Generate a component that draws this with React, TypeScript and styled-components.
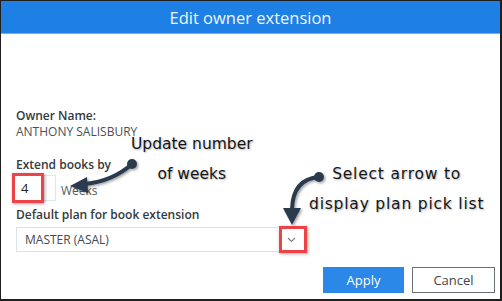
import styled, { createGlobalStyle } from "styled-components";

const GlobalStyle = createGlobalStyle`
  html, body {
    margin: 0;
    padding: 0;
    background: #ffffff;
  }
  body {
    font-family: "Open Sans", "Noto Sans", Arial, sans-serif;
  }
`;

const Frame = styled.div`
  position: relative;
  width: 502px;
  height: 301px;
  box-sizing: border-box;
  border-style: solid;
  border-color: #1f1f1f;
  border-width: 1px 2px 2px 1px;
  background: #ffffff;
  display: flex;
  flex-direction: column;
  overflow: hidden;
`;

const TitleBar = styled.div`
  height: 32px;
  background: #1e80e5;
  border-bottom: 1px solid #6fb0f2;
  color: #eef5fd;
  font-size: 16.5px;
  display: flex;
  align-items: center;
  justify-content: center;
`;

const Body = styled.div`
  flex: 1;
  display: flex;
  flex-direction: column;
  padding: 74px 0 0 15px;
`;

const Label = styled.div<{ $gap?: number }>`
  font-size: 12px;
  line-height: 16px;
  font-weight: 600;
  color: #333a40;
  margin-top: ${({ $gap }) => $gap ?? 0}px;
`;

const Value = styled.div`
  font-size: 12px;
  line-height: 16px;
  color: #4a5056;
`;

const InputRow = styled.div`
  display: flex;
  align-items: center;
  gap: 5px;
  margin-top: 2px;
  margin-left: -2px;
`;

const Marked = styled.div`
  position: relative;
  display: flex;
`;

const NumberInput = styled.div`
  width: 42px;
  height: 26px;
  box-sizing: border-box;
  border: 1px solid #dde6ee;
  font-size: 13px;
  color: #222;
  padding-left: 6px;
  display: flex;
  align-items: center;
`;

const Unit = styled.span`
  font-size: 12px;
  color: #555b61;
  margin-top: 4px;
`;

const RedBox = styled.div<{ $l: number; $t: number; $w: number; $h: number }>`
  position: absolute;
  left: ${({ $l }) => $l}px;
  top: ${({ $t }) => $t}px;
  width: ${({ $w }) => $w}px;
  height: ${({ $h }) => $h}px;
  box-sizing: border-box;
  border: 3px solid #ec4349;
  box-shadow: 1px 1px 3px rgba(0, 0, 0, 0.35);
  pointer-events: none;
`;

const Select = styled.div`
  position: relative;
  width: 289px;
  height: 25px;
  box-sizing: border-box;
  border: 1px solid #d8e3ec;
  margin-top: 4px;
  display: flex;
  align-items: center;
  justify-content: space-between;
  padding: 0 8px 0 8px;
  font-size: 12px;
  color: #444a50;
`;

const Footer = styled.div`
  display: flex;
  justify-content: flex-end;
  gap: 8px;
  padding: 15px 5px 0 0;
`;

const Button = styled.button<{ $primary?: boolean }>`
  height: 26px;
  width: ${({ $primary }) => ($primary ? 81 : 83)}px;
  box-sizing: border-box;
  font-family: inherit;
  font-size: 13px;
  border: 1px solid ${({ $primary }) => ($primary ? "#2b88e8" : "#6b7075")};
  background: ${({ $primary }) => ($primary ? "#2b88e8" : "#ffffff")};
  color: ${({ $primary }) => ($primary ? "#ffffff" : "#3f454b")};
  padding: 0;
`;

const Note = styled.div<{ $l: number; $t: number; $spacing?: number }>`
  position: absolute;
  left: ${({ $l }) => $l}px;
  top: ${({ $t }) => $t}px;
  font-family: "DejaVu Sans", cursive;
  font-size: 15.5px;
  line-height: 30px;
  letter-spacing: ${({ $spacing }) => $spacing ?? 0}px;
  color: #151515;
  text-align: center;
  white-space: nowrap;
  text-shadow: 1px 1px 2px rgba(0, 0, 0, 0.3);
`;

const ArrowSvg = styled.svg`
  position: absolute;
  left: 0;
  top: 0;
  width: 502px;
  height: 301px;
  pointer-events: none;
  overflow: visible;
`;

const Chevron = () => (
  <svg width="9" height="6" viewBox="0 0 9 6">
    <path d="M1 1l3.5 3.5L8 1" fill="none" stroke="#7a8087" strokeWidth="1.2" />
  </svg>
);

export default function App() {
  return (
    <>
      <GlobalStyle />
      <Frame>
        <TitleBar>Edit owner extension</TitleBar>
        <Body>
          <Label>Owner Name:</Label>
          <Value>ANTHONY SALISBURY</Value>
          <Label $gap={17}>Extend books by</Label>
          <InputRow>
            <Marked>
              <NumberInput>4</NumberInput>
              <RedBox $l={-2} $t={-2} $w={32} $h={30} />
            </Marked>
            <Unit>Weeks</Unit>
          </InputRow>
          <Label $gap={6}>Default plan for book extension</Label>
          <Select>
            <span>MASTER (ASAL)</span>
            <Chevron />
            <RedBox $l={262} $t={-2} $w={28} $h={27} />
          </Select>
          <Footer>
            <Button $primary>Apply</Button>
            <Button>Cancel</Button>
          </Footer>
        </Body>

        <ArrowSvg viewBox="0 0 502 301">
          <defs>
            <filter id="sh" x="-20%" y="-20%" width="140%" height="140%">
              <feDropShadow dx="1.5" dy="1.5" stdDeviation="1.2" floodColor="#000" floodOpacity="0.35" />
            </filter>
          </defs>
          <g filter="url(#sh)" fill="#2c3a4e" stroke="#2c3a4e">
            <circle cx="131" cy="163" r="5" stroke="none" />
            <path d="M131 163 Q112 180 84 183" fill="none" strokeWidth="4" strokeLinecap="round" />
            <path d="M69 185 L86 176 L87 192 Z" stroke="none" />
            <circle cx="318" cy="176" r="5" stroke="none" />
            <path d="M318 176 Q292 178 291 208" fill="none" strokeWidth="4" strokeLinecap="round" />
            <path d="M291 224 L282 207 L300 207 Z" stroke="none" />
          </g>
        </ArrowSvg>

        <Note $l={130} $t={128}>
          Update number
          <br />
          of weeks
        </Note>
        <Note $l={308} $t={158} $spacing={0.8}>
          Select arrow to
          <br />
          display plan pick list
        </Note>
      </Frame>
    </>
  );
}
